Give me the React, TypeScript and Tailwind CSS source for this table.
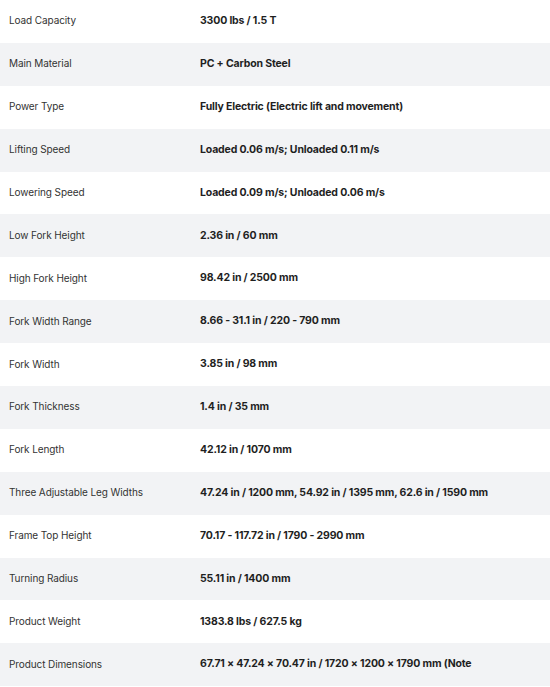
const SPECS: [string, string][] = [
  ["Load Capacity", "3300 lbs / 1.5 T"],
  ["Main Material", "PC + Carbon Steel"],
  ["Power Type", "Fully Electric (Electric lift and movement)"],
  ["Lifting Speed", "Loaded 0.06 m/s; Unloaded 0.11 m/s"],
  ["Lowering Speed", "Loaded 0.09 m/s; Unloaded 0.06 m/s"],
  ["Low Fork Height", "2.36 in / 60 mm"],
  ["High Fork Height", "98.42 in / 2500 mm"],
  ["Fork Width Range", "8.66 - 31.1 in / 220 - 790 mm"],
  ["Fork Width", "3.85 in / 98 mm"],
  ["Fork Thickness", "1.4 in / 35 mm"],
  ["Fork Length", "42.12 in / 1070 mm"],
  ["Three Adjustable Leg Widths", "47.24 in / 1200 mm, 54.92 in / 1395 mm, 62.6 in / 1590 mm"],
  ["Frame Top Height", "70.17 - 117.72 in / 1790 - 2990 mm"],
  ["Turning Radius", "55.11 in / 1400 mm"],
  ["Product Weight", "1383.8 lbs / 627.5 kg"],
  ["Product Dimensions", "67.71 × 47.24 × 70.47 in / 1720 × 1200 × 1790 mm (Note"],
];

export default function App() {
  return (
    <div className="w-[550px] h-[687px] overflow-hidden bg-white font-['Inter',sans-serif]">
      {SPECS.map(([label, value], i) => (
        <div
          key={label}
          className={`flex items-center h-[42.9px] ${
            i % 2 === 1 ? "bg-[#f2f3f5]" : "bg-white"
          }`}
        >
          <div className="w-[200px] pl-[9px] pb-px shrink-0 text-[10px] tracking-[-0.01em] text-[#333333]">
            {label}
          </div>
          <div className="flex-1 pb-px whitespace-nowrap text-[10.5px] font-bold tracking-[-0.015em] text-[#1f1f1f]">
            {value}
          </div>
        </div>
      ))}
    </div>
  );
}
